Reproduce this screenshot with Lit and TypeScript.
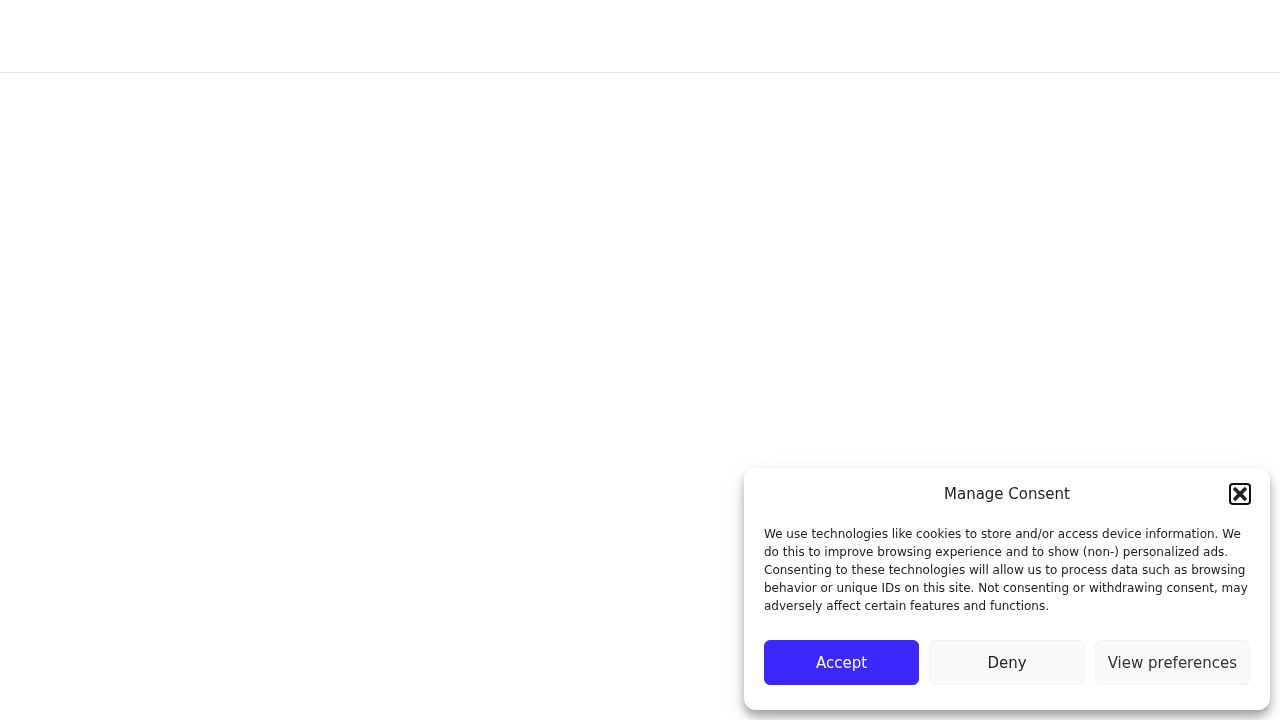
import { LitElement, html, css } from "lit";
import { customElement, state } from "lit/decorators.js";

@customElement("consent-banner")
export class ConsentBanner extends LitElement {
  static styles = css`
    :host {
      display: block;
    }
    .card {
      box-sizing: border-box;
      padding: 15px 20px 25px;
      border-radius: 12px;
      background: #fff;
      color: #222;
      box-shadow: 0 8px 24px rgba(0, 0, 0, 0.12), 0 6px 8px rgba(0, 0, 0, 0.3);
    }
    .header {
      display: grid;
      grid-template-columns: 1fr auto 1fr;
      align-items: center;
      height: 22px;
      margin-bottom: 20px;
    }
    .title {
      grid-column: 2;
      margin: 0;
      font-size: 15px;
      font-weight: 400;
      line-height: 22px;
    }
    .close {
      justify-self: end;
      box-sizing: border-box;
      display: flex;
      align-items: center;
      justify-content: center;
      width: 22px;
      height: 22px;
      margin-right: -1px;
      padding: 0;
      border: 2px solid #101010;
      border-radius: 4px;
      background: #fff;
      color: #222;
      cursor: pointer;
    }
    .icon {
      flex: none;
      width: 20px;
      height: 20px;
    }
    .message {
      margin: 0 0 25px;
      font-size: 12px;
      line-height: 18px;
    }
    .buttons {
      display: grid;
      grid-template-columns: repeat(3, minmax(0, 1fr));
      gap: 10px;
    }
    .btn {
      box-sizing: border-box;
      height: 45px;
      padding: 0 10px;
      border: 1px solid #f2f2f2;
      border-radius: 6px;
      background: #f9f9f9;
      color: #222;
      font-family: inherit;
      font-size: 15px;
      white-space: nowrap;
      cursor: pointer;
    }
    .accept {
      border-color: #3d27ff;
      background: #3d27ff;
      color: #fff;
    }
    .preferences {
      color: #333;
    }
    @media (max-width: 480px) {
      .buttons {
        grid-template-columns: 1fr;
      }
    }
  `;

  private dismiss() {
    this.dispatchEvent(new CustomEvent("dismiss"));
  }

  render() {
    return html`
      <section class="card" role="dialog" aria-labelledby="title" aria-describedby="message">
        <div class="header">
          <h2 class="title" id="title">Manage Consent</h2>
          <button class="close" type="button" aria-label="Close dialog" @click=${this.dismiss}>
            <svg class="icon" viewBox="0 0 352 512" aria-hidden="true">
              <path
                fill="currentColor"
                d="M242.72 256l100.07-100.07c12.28-12.28 12.28-32.19 0-44.48l-22.24-22.24c-12.28-12.28-32.19-12.28-44.48 0L176 189.28 75.93 89.21c-12.28-12.28-32.19-12.28-44.48 0L9.21 111.45c-12.28 12.28-12.28 32.19 0 44.48L109.28 256 9.21 356.07c-12.28 12.28-12.28 32.19 0 44.48l22.24 22.24c12.28 12.28 32.2 12.28 44.48 0L176 322.72l100.07 100.07c12.28 12.28 32.2 12.28 44.48 0l22.24-22.24c12.28-12.28 12.28-32.19 0-44.48L242.72 256z"
              />
            </svg>
          </button>
        </div>
        <p class="message" id="message">
          We use technologies like cookies to store and/or access device information. We do this to
          improve browsing experience and to show (non-) personalized ads. Consenting to these
          technologies will allow us to process data such as browsing behavior or unique IDs on this
          site. Not consenting or withdrawing consent, may adversely affect certain features and
          functions.
        </p>
        <div class="buttons">
          <button class="btn accept" type="button" @click=${this.dismiss}>Accept</button>
          <button class="btn" type="button" @click=${this.dismiss}>Deny</button>
          <button class="btn preferences" type="button">View preferences</button>
        </div>
      </section>
    `;
  }
}

@customElement("app-root")
export class AppRoot extends LitElement {
  static styles = css`
    :host {
      display: block;
      min-height: 100vh;
      background: #fff;
      font-family: "DejaVu Sans", sans-serif;
    }
    .site-header {
      height: 72px;
      border-bottom: 1px solid #e5e5e5;
    }
    .banner {
      position: fixed;
      right: 10px;
      bottom: 10px;
      width: 526px;
      max-width: calc(100vw - 20px);
    }
  `;

  @state() private open = true;

  render() {
    return html`
      <header class="site-header"></header>
      <main></main>
      ${this.open
        ? html`<consent-banner class="banner" @dismiss=${() => (this.open = false)}></consent-banner>`
        : null}
    `;
  }
}
